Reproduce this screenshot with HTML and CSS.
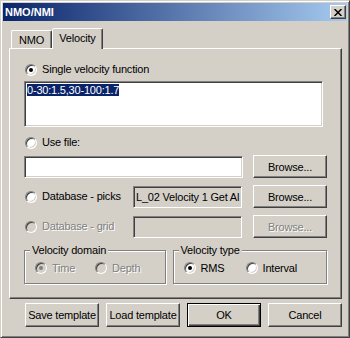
FILE: index.html
```html
<!DOCTYPE html>
<html lang="en">
<head>
    <meta charset="UTF-8">
    <title>NMO/NMI</title>
    <link rel="stylesheet" href="styles.css">
</head>
<body>
    <div class="window">
        <div class="titlebar">
            <span class="title">NMO/NMI</span>
            <span class="close-btn">
                <svg width="8" height="7" viewBox="0 0 8 7"><path d="M0.5 0 L7.5 7 M7.5 0 L0.5 7" stroke="#000" stroke-width="1.5"/></svg>
            </span>
        </div>

        <div class="dialog-body">
            <div class="tabs">
                <div class="tab">NMO</div>
                <div class="tab active">Velocity</div>
            </div>

            <div class="panel">
                <div class="radio-row">
                    <span class="radio checked"></span>Single velocity function
                </div>
                <div class="textarea"><span class="selected">0-30:1.5,30-100:1.7</span></div>

                <div class="radio-row use-file">
                    <span class="radio"></span>Use file:
                </div>
                <div class="field-row first">
                    <div class="input wide"></div>
                    <div class="btn">Browse...</div>
                </div>

                <div class="field-row">
                    <div class="radio-row label">
                        <span class="radio"></span>Database - picks
                    </div>
                    <div class="input readonly">L_02 Velocity 1 Get Al</div>
                    <div class="btn">Browse...</div>
                </div>

                <div class="field-row">
                    <div class="radio-row label disabled">
                        <span class="radio"></span>Database - grid
                    </div>
                    <div class="input readonly"></div>
                    <div class="btn disabled">Browse...</div>
                </div>

                <div class="groups">
                    <div class="group domain">
                        <span class="group-label">Velocity domain</span>
                        <div class="option disabled"><span class="radio checked"></span>Time</div>
                        <div class="option disabled"><span class="radio"></span>Depth</div>
                    </div>
                    <div class="group vtype">
                        <span class="group-label">Velocity type</span>
                        <div class="option rms"><span class="radio checked"></span>RMS</div>
                        <div class="option"><span class="radio"></span>Interval</div>
                    </div>
                </div>
            </div>

            <div class="actions">
                <div class="btn big">Save template</div>
                <div class="btn big">Load template</div>
                <div class="btn big default">OK</div>
                <div class="btn big">Cancel</div>
            </div>
        </div>
    </div>
</body>
</html>
```

FILE: styles.css
```css
body {
    margin: 0;
    font-family: "Liberation Sans", Arial, sans-serif;
    font-size: 11px;
    letter-spacing: -0.2px;
    color: #000;
    background-color: #d4d0c8;
}

.window {
    width: 350px;
    height: 338px;
    box-sizing: border-box;
    border: 1px solid;
    border-color: #d4d0c8 #404040 #404040 #d4d0c8;
    box-shadow: inset 1px 1px #fff, inset -1px -1px #808080;
    padding: 2px;
    background-color: #d4d0c8;
    display: flex;
    flex-direction: column;
}

.titlebar {
    height: 18px;
    display: flex;
    align-items: center;
    justify-content: space-between;
    padding: 0 1px 0 2px;
    background: linear-gradient(to right, #0a246a, #a6caf0);
    color: #fff;
    font-weight: bold;
    letter-spacing: 0;
}

.close-btn {
    width: 16px;
    height: 14px;
    box-sizing: border-box;
    border: 1px solid;
    border-color: #fff #404040 #404040 #fff;
    box-shadow: inset -1px -1px #808080;
    background-color: #d4d0c8;
    display: flex;
    justify-content: center;
    align-items: center;
}

.dialog-body {
    flex: 1;
    padding: 7px 5px 0 6px;
    display: flex;
    flex-direction: column;
}

/* tabs */
.tabs {
    display: flex;
    align-items: flex-end;
    height: 20px;
    padding-left: 2px;
}

.tab {
    height: 18px;
    box-sizing: border-box;
    border: 1px solid;
    border-bottom: none;
    border-color: #fff #404040 transparent #fff;
    box-shadow: inset -1px 0 #808080;
    border-radius: 2px 2px 0 0;
    padding-top: 3px;
    line-height: 13px;
    text-align: center;
    width: 41px;
}

.tab.active {
    width: 51px;
    height: 21px;
    margin-bottom: -1px;
    position: relative;
    z-index: 1;
    background-color: #d4d0c8;
}

.panel {
    height: 251px;
    box-sizing: border-box;
    border: 1px solid;
    border-color: #fff #404040 #404040 #fff;
    box-shadow: inset -1px -1px #808080;
    padding: 14px 14px 0 14px;
}

/* radios */
.radio-row {
    display: flex;
    align-items: center;
    height: 13px;
    line-height: 13px;
    white-space: nowrap;
}

.radio {
    width: 12px;
    height: 12px;
    box-sizing: border-box;
    flex: none;
    border-radius: 50%;
    border: 1px solid;
    border-color: #808080 #fff #fff #808080;
    box-shadow: inset 1px 1px #404040, inset -1px -1px #d4d0c8;
    background-color: #fff;
    display: flex;
    justify-content: center;
    align-items: center;
    margin: 0 5px 0 1px;
}

.radio.checked::after {
    content: "";
    width: 4px;
    height: 4px;
    border-radius: 50%;
    background-color: #000;
}

.disabled {
    color: #808080;
    text-shadow: 1px 1px #fff;
}

.disabled .radio {
    background-color: #d4d0c8;
}

.disabled .radio.checked::after {
    background-color: #808080;
}

/* fields */
.textarea {
    width: 299px;
    height: 46px;
    box-sizing: border-box;
    margin-top: 5px;
    padding: 2px 2px;
    border: 1px solid;
    border-color: #808080 #fff #fff #808080;
    box-shadow: inset 1px 1px #404040, inset -1px -1px #d4d0c8;
    background-color: #fff;
    line-height: 13px;
}

.selected {
    background-color: #0a246a;
    color: #fff;
}

.use-file {
    margin-top: 9px;
}

.field-row {
    display: flex;
    align-items: center;
    height: 23px;
    margin-top: 7px;
}

.field-row.first {
    margin-top: 6px;
}

.field-row .label {
    width: 109px;
}

.input {
    height: 22px;
    box-sizing: border-box;
    border: 1px solid;
    border-color: #808080 #fff #fff #808080;
    box-shadow: inset 1px 1px #404040, inset -1px -1px #d4d0c8;
    background-color: #fff;
    padding: 0 2px;
    line-height: 20px;
    white-space: nowrap;
    width: 109px;
}

.input.wide {
    width: 219px;
}

.input.readonly {
    background-color: #d4d0c8;
}

.btn {
    width: 74px;
    height: 23px;
    box-sizing: border-box;
    border: 1px solid;
    border-color: #fff #404040 #404040 #fff;
    box-shadow: inset -1px -1px #808080;
    display: flex;
    justify-content: center;
    align-items: center;
    margin-left: auto;
}

/* group boxes */
.groups {
    display: flex;
    gap: 7px;
    margin-top: 12px;
}

.group {
    position: relative;
    height: 34px;
    box-sizing: border-box;
    border: 1px solid #808080;
    box-shadow: 1px 1px #fff, inset 1px 1px #fff;
    padding: 10px 0 0 10px;
    display: flex;
    align-items: flex-start;
}

.group.domain {
    width: 142px;
}

.group.vtype {
    width: 155px;
}

.group-label {
    position: absolute;
    top: -7px;
    left: 5px;
    padding: 0 2px;
    line-height: 13px;
    background-color: #d4d0c8;
}

.option {
    display: flex;
    align-items: center;
    height: 13px;
    width: 60px;
    white-space: nowrap;
}

.option.rms {
    width: 62px;
}

.option .radio {
    margin-left: 0;
}

/* bottom buttons */
.actions {
    display: flex;
    gap: 7px;
    margin-top: 4px;
    padding-left: 16px;
}

.btn.big {
    height: 24px;
    margin-left: 0;
}

.btn.default {
    border-color: #000;
    box-shadow: inset 1px 1px #fff, inset -1px -1px #404040, inset -2px -2px #808080;
}
```
